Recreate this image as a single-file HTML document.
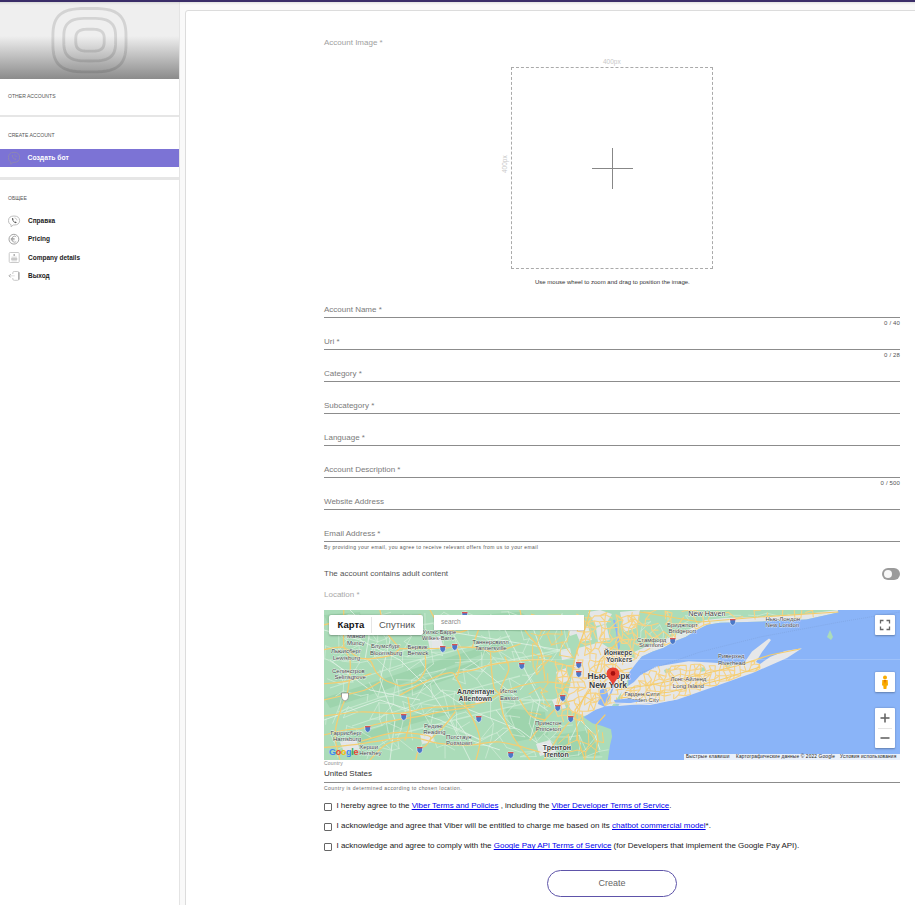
<!DOCTYPE html>
<html><head><meta charset="utf-8">
<style>
*{box-sizing:border-box;margin:0;padding:0}
html,body{width:915px;height:905px;overflow:hidden;background:#fff;font-family:"Liberation Sans",sans-serif}
.a{position:absolute;white-space:nowrap;line-height:1}
#topbar{position:absolute;left:0;top:0;width:915px;height:2px;background:#3a2d68}
#side{position:absolute;left:0;top:2px;width:179px;height:903px;background:#fff}
#sideborder{position:absolute;left:179px;top:2px;width:1px;height:903px;background:#e4e4e4}
#mainbg{position:absolute;left:180px;top:2px;width:735px;height:903px;background:#f9f9f9}
#card{position:absolute;left:185px;top:10px;width:760px;height:920px;background:#fff;border:1px solid #dcdcdc;border-radius:3px}
#hdr{position:absolute;left:0;top:2px;width:179px;height:77px;background:linear-gradient(to bottom,#efefef 0,#efefef 34px,#8b8b8b 77px)}
.sec{color:#555;font-size:5.1px;left:8px}
.div{position:absolute;left:0;width:179px;height:2px;background:#e6e6e6}
.item{font-size:6.5px;font-weight:bold;color:#222;left:28px}
.lbl{font-size:8px;color:#7a7a7a;left:324px}
.ul{position:absolute;left:324px;width:576px;height:1px;background:#8c8c8c}
.cnt{font-size:6px;color:#555;letter-spacing:0.15px}
.cb{position:absolute;left:324px;width:8px;height:8px;border:1px solid #666;border-radius:1px}
.chk{left:336.5px;font-size:8px;color:#1a1a1a;letter-spacing:-0.04px}
.chk u{color:#0000ee;text-decoration:underline;text-underline-offset:1px}
</style></head><body>
<div id="topbar"></div>
<div id="side"></div>
<div id="hdr">
<svg width="179" height="77" style="position:absolute;left:0;top:0">
 <g fill="none" stroke="rgba(0,0,0,0.115)" stroke-width="2.9"><path d="M126.05 38.15 L125.94 45.57 L125.61 49.56 L125.06 52.78 L124.28 55.54 L123.29 57.96 L122.06 60.10 L120.61 62.00 L118.92 63.68 L116.99 65.14 L114.80 66.40 L112.32 67.46 L109.53 68.32 L106.34 68.99 L102.63 69.47 L98.02 69.75 L89.45 69.85 L80.88 69.75 L76.27 69.47 L72.56 68.99 L69.37 68.32 L66.58 67.46 L64.10 66.40 L61.91 65.14 L59.98 63.68 L58.29 62.00 L56.84 60.10 L55.61 57.96 L54.62 55.54 L53.84 52.78 L53.29 49.56 L52.96 45.57 L52.85 38.15 L52.96 30.73 L53.29 26.74 L53.84 23.52 L54.62 20.76 L55.61 18.34 L56.84 16.20 L58.29 14.30 L59.98 12.62 L61.91 11.16 L64.10 9.90 L66.58 8.84 L69.37 7.98 L72.56 7.31 L76.27 6.83 L80.88 6.55 L89.45 6.45 L98.02 6.55 L102.63 6.83 L106.34 7.31 L109.53 7.98 L112.32 8.84 L114.80 9.90 L116.99 11.16 L118.92 12.62 L120.61 14.30 L122.06 16.20 L123.29 18.34 L124.28 20.76 L125.06 23.52 L125.61 26.74 L125.94 30.73Z"/><path d="M115.65 37.65 L115.57 42.64 L115.34 45.32 L114.95 47.48 L114.40 49.34 L113.69 50.96 L112.82 52.40 L111.79 53.68 L110.60 54.80 L109.23 55.78 L107.67 56.63 L105.92 57.34 L103.94 57.92 L101.68 58.37 L99.04 58.69 L95.78 58.89 L89.70 58.95 L83.62 58.89 L80.36 58.69 L77.72 58.37 L75.46 57.92 L73.48 57.34 L71.73 56.63 L70.17 55.78 L68.80 54.80 L67.61 53.68 L66.58 52.40 L65.71 50.96 L65.00 49.34 L64.45 47.48 L64.06 45.32 L63.83 42.64 L63.75 37.65 L63.83 32.66 L64.06 29.98 L64.45 27.82 L65.00 25.96 L65.71 24.34 L66.58 22.90 L67.61 21.62 L68.80 20.50 L70.17 19.52 L71.73 18.67 L73.48 17.96 L75.46 17.38 L77.72 16.93 L80.36 16.61 L83.62 16.41 L89.70 16.35 L95.78 16.41 L99.04 16.61 L101.68 16.93 L103.94 17.38 L105.92 17.96 L107.67 18.67 L109.23 19.52 L110.60 20.50 L111.79 21.62 L112.82 22.90 L113.69 24.34 L114.40 25.96 L114.95 27.82 L115.34 29.98 L115.57 32.66Z"/><path d="M104.25 38.20 L104.21 40.76 L104.08 42.14 L103.86 43.25 L103.56 44.21 L103.17 45.04 L102.70 45.78 L102.13 46.44 L101.47 47.02 L100.72 47.52 L99.87 47.96 L98.91 48.32 L97.82 48.62 L96.58 48.85 L95.13 49.02 L93.34 49.12 L90.00 49.15 L86.66 49.12 L84.87 49.02 L83.42 48.85 L82.18 48.62 L81.09 48.32 L80.13 47.96 L79.28 47.52 L78.53 47.02 L77.87 46.44 L77.30 45.78 L76.83 45.04 L76.44 44.21 L76.14 43.25 L75.92 42.14 L75.79 40.76 L75.75 38.20 L75.79 35.64 L75.92 34.26 L76.14 33.15 L76.44 32.19 L76.83 31.36 L77.30 30.62 L77.87 29.96 L78.53 29.38 L79.28 28.88 L80.13 28.44 L81.09 28.08 L82.18 27.78 L83.42 27.55 L84.87 27.38 L86.66 27.28 L90.00 27.25 L93.34 27.28 L95.13 27.38 L96.58 27.55 L97.82 27.78 L98.91 28.08 L99.87 28.44 L100.72 28.88 L101.47 29.38 L102.13 29.96 L102.70 30.62 L103.17 31.36 L103.56 32.19 L103.86 33.15 L104.08 34.26 L104.21 35.64Z"/></g>
</svg>
</div>
<div id="sideborder"></div>
<div id="mainbg"></div>
<div id="card"></div>
<div style="position:absolute;left:0;top:2px;width:915px;height:3px;background:linear-gradient(to bottom,rgba(0,0,0,0.1),rgba(0,0,0,0.04) 50%,rgba(0,0,0,0))"></div>

<!-- sidebar text -->
<div class="a sec" style="top:93.8px">OTHER ACCOUNTS</div>
<div class="div" style="top:115px"></div>
<div class="a sec" style="top:132.7px">CREATE ACCOUNT</div>
<div style="position:absolute;left:0;top:149px;width:179px;height:18px;background:#7c73d5"></div>
<div class="a item" style="top:154.8px;color:#fff;font-size:6.8px;left:27.5px">Создать бот</div>
<div class="div" style="top:177px;height:3px"></div>
<div class="a sec" style="top:196px">ОБЩЕЕ</div>
<div class="a item" style="top:217.5px">Справка</div>
<div class="a item" style="top:235.8px">Pricing</div>
<div class="a item" style="top:254.6px">Company details</div>
<div class="a item" style="top:273.2px">Выход</div>


<!-- sidebar icons -->
<svg width="14" height="15" style="position:absolute;left:7px;top:151px" viewBox="0 0 14 15"><g fill="none" stroke="#8d86b3" stroke-width="1"><path d="M7 1.3 C10.6 1.3 12.6 3 12.6 6.4 C12.6 9.8 10.6 11.4 7 11.4 L6 11.4 L3.8 13.3 L3.8 11 C2.2 10.2 1.4 8.8 1.4 6.4 C1.4 3 3.4 1.3 7 1.3Z"/></g><path d="M4.7 4.3 Q5 7.6 8.7 9 Q9.5 8.7 9.4 8.1 L8.3 7.2 L7.6 7.7 Q6.3 7 5.9 5.8 L6.4 5.1 L5.7 3.9 Q4.9 3.8 4.7 4.3Z" fill="#8d86b3"/><path d="M7.3 3.6 Q9.6 3.8 10 6.2 M7.3 4.6 Q8.8 4.8 9 6.1" fill="none" stroke="#8d86b3" stroke-width="0.5"/></svg>

<svg width="14" height="15" style="position:absolute;left:7px;top:214px" viewBox="0 0 14 15"><g fill="none" stroke="#b8b8b8" stroke-width="0.9"><path d="M7 2 C10.6 2 12.6 3.6 12.6 6.6 C12.6 9.6 10.6 11 7 11 L6.2 11 L4.1 12.8 L4.1 10.7 C2.4 10 1.5 8.7 1.5 6.6 C1.5 3.6 3.4 2 7 2Z"/></g><path d="M4.9 4.5 Q5.2 7.8 8.9 9.2 Q9.7 8.9 9.6 8.3 L8.5 7.4 L7.8 7.9 Q6.5 7.2 6.1 6 L6.6 5.3 L5.9 4.1 Q5.1 4 4.9 4.5Z" fill="#555"/><path d="M7.5 3.9 Q9.7 4.1 10.1 6.4" fill="none" stroke="#aaa" stroke-width="0.6"/></svg>

<svg width="14" height="14" style="position:absolute;left:7px;top:232px" viewBox="0 0 14 14"><circle cx="6.9" cy="7.2" r="4.9" fill="none" stroke="#9a9a9a" stroke-width="0.9"/><path d="M9.2 5 Q8.4 4.2 7.4 4.2 Q5 4.3 4.8 7.2 Q5 10.1 7.4 10.2 Q8.4 10.2 9.2 9.4 M3.8 6.6 H7.6 M3.8 7.8 H7.6" fill="none" stroke="#888" stroke-width="0.7"/></svg>

<svg width="14" height="14" style="position:absolute;left:7px;top:250px" viewBox="0 0 14 14"><rect x="2.2" y="2.5" width="10" height="10" rx="1" fill="none" stroke="#c4c4c4" stroke-width="0.9"/><circle cx="7.2" cy="5" r="0.9" fill="#aaa"/><path d="M4.5 7.2 H9.9 M4.2 9 H10.2 M4.5 10.8 H9.9" stroke="#c8c8c8" stroke-width="0.8"/><path d="M4.2 9 H10.2" stroke="#aaa" stroke-width="1"/></svg>

<svg width="14" height="14" style="position:absolute;left:7px;top:269px" viewBox="0 0 14 14"><path d="M5.8 5 V3.8 Q5.8 2.5 7.2 2.5 H10.8 Q11.9 2.5 11.9 3.8 V10 Q11.9 11.3 10.8 11.3 H7.2 Q5.8 11.3 5.8 10 V9" fill="none" stroke="#c4c4c4" stroke-width="0.9"/><path d="M11.9 3.2 V10.6" stroke="#8a8a8a" stroke-width="0.9"/><path d="M3.5 5.3 L2.1 6.8 L3.5 8.3" fill="none" stroke="#888" stroke-width="0.9"/><path d="M2.3 6.8 H7.8" stroke="#d8d8d8" stroke-width="0.8"/></svg>

<!-- form -->
<div class="a lbl" style="top:38.8px;color:#a0a0a0">Account Image *</div>
<div style="position:absolute;left:511px;top:67px;width:202px;height:202px;border:1px dashed #aaa"></div>
<div style="position:absolute;left:592px;top:168px;width:41px;height:1px;background:#878787"></div>
<div style="position:absolute;left:612px;top:148px;width:1px;height:41px;background:#878787"></div>

<div class="a lbl" style="top:305.8px">Account Name *</div><div class="ul" style="top:317px"></div>
<div class="a lbl" style="top:337.8px">Uri *</div><div class="ul" style="top:349px"></div>
<div class="a lbl" style="top:369.8px">Category *</div><div class="ul" style="top:381px"></div>
<div class="a lbl" style="top:401.8px">Subcategory *</div><div class="ul" style="top:413px"></div>
<div class="a lbl" style="top:433.8px">Language *</div><div class="ul" style="top:445px"></div>
<div class="a lbl" style="top:465.8px">Account Description *</div><div class="ul" style="top:477px"></div>
<div class="a lbl" style="top:497.8px">Website Address</div><div class="ul" style="top:509px"></div>
<div class="a lbl" style="top:529.8px">Email Address *</div><div class="ul" style="top:541px"></div>


<!-- counters -->
<div class="a cnt" style="top:320px;right:15px">0 / 40</div>
<div class="a cnt" style="top:352px;right:15px">0 / 28</div>
<div class="a cnt" style="top:480px;right:15px">0 / 500</div>

<div class="a" style="left:324px;top:544.6px;font-size:5px;color:#555;letter-spacing:0.4px">By providing your email, you agree to receive relevant offers from us to your email</div>
<div class="a" style="left:324px;top:570px;font-size:8px;color:#555">The account contains adult content</div>
<div style="position:absolute;left:882px;top:568px;width:18px;height:12px;border-radius:6px;background:#9b9b9b"></div>
<div style="position:absolute;left:884px;top:570px;width:8px;height:8px;border-radius:50%;background:#f8f8f8"></div>
<div class="a lbl" style="top:591px;color:#a8a8a8">Location *</div>

<!-- map -->
<div id="map" style="position:absolute;left:324px;top:610px;width:576px;height:150px;background:#aadcbb;overflow:hidden"><svg width="576" height="150" viewBox="324 610 576 150" style="position:absolute;left:0;top:0">
<rect x="324" y="610" width="576" height="150" fill="#abdcb9"/>
<!-- darker green ridges/forest -->
<g fill="#9ed4ad">
<path d="M324 698 L380 680 L440 660 L500 642 L505 646 L445 668 L385 690 L330 708Z"/>
<path d="M350 738 L410 716 L470 702 L472 708 L412 724 L355 746Z"/>
<path d="M460 616 L520 612 L545 626 L525 632 L470 628Z"/>
<path d="M505 708 L545 712 L548 735 L515 742Z"/>
<path d="M324 615 L360 612 L362 622 L330 628Z"/>
<path d="M400 688 L440 672 L480 660 L478 668 L440 682 L405 695Z"/>
<path d="M555 735 L590 730 L600 755 L560 758Z"/>
</g>
<!-- light ridge streaks -->
<g stroke="#c6e9cf" stroke-width="1.3" fill="none">
<path d="M330 688 L410 662 L480 644 L510 636"/>
<path d="M338 712 L420 684 L500 662"/>
<path d="M352 726 L430 700 L520 676"/>
<path d="M395 735 L470 716 L540 700"/>
<path d="M345 638 L400 628 L455 620"/>
<path d="M470 670 L520 658 L560 650"/>
</g>
<!-- urban grey NJ/NYC -->
<g fill="#e4e6e8">
<path d="M578 648 L590 645 L600 642 L612 650 L628 655 L640 661 L632 670 L623 690 L612 706 L598 712 L584 716 L572 712 L566 700 L570 685 L574 665Z"/><path d="M556 672 L566 668 L570 680 L560 684Z"/><path d="M552 700 L562 696 L566 708 L556 710Z"/><path d="M575 630 L588 626 L592 640 L580 642Z"/><path d="M596 628 L606 624 L610 640 L598 642Z"/><path d="M560 650 L570 648 L572 658 L562 660Z"/>
<path d="M588 612 L600 610 L612 614 L606 624 L596 626Z"/>
<path d="M566 622 L578 618 L582 632 L570 636Z"/>
<path d="M620 612 L640 610 L636 628 L624 632Z"/>
<path d="M472 694 L484 690 L490 700 L476 704Z"/>
<path d="M536 744 L550 740 L556 752 L540 756Z"/>
<path d="M420 734 L432 732 L434 742 L422 744Z"/>
<path d="M340 742 L356 738 L360 750 L344 752Z"/>
<path d="M428 640 L440 636 L444 648 L430 650Z"/>

</g>
<!-- CT land (re-assert) -->
<path d="M640 610 L838 610 L835 613 L806 619 L756 622 L730 623 L710 625 L694 632 L683 637 L667 645 L653 654 L639 662 L634 650 L642 630Z" fill="#abdcb9"/>
<path d="M634 652 L650 645 L668 638 L690 629 L705 620 L725 618 L760 617 L806 614 L838 610 L837.8 612.4 L806.4 619.4 L756 621.8 L720 622.7 L707.4 624.8 L696.5 630.3 L685.6 636.9 L674.6 641.2 L663.7 647.8 L652.8 651.6 L641.9 656.5 L636.4 663.1Z" fill="#e4e6e8"/>
<!-- water -->
<path d="M838 610 L900 610 L900 760 L607.8 760 L610 745.6 L612.1 736.8 L611 729.2 L602.3 726 L592.5 723.2 L583.7 717.2 L595 710 L605.6 706.2 L616.5 705.7 L623 705.1 L628 690 L628.7 672.9 L636.4 663.1 L641.9 656.5 L652.8 651.6 L663.7 647.8 L674.6 641.2 L685.6 636.9 L696.5 630.3 L707.4 624.8 L720 622.7 L756 621.8 L806.4 619.4 L837.8 612.4Z" fill="#8ab4f8"/>
<!-- rivers --><path d="M600 690 L606 688 L610 700 L605 707 L598 704Z" fill="#8ab4f8"/>
<path d="M614 620 L617 632 L619 647 L616 652" stroke="#8ab4f8" stroke-width="2" fill="none"/>
<path d="M608 700 L612 690 L615 680" stroke="#8ab4f8" stroke-width="1.5" fill="none"/>
<!-- Long Island land -->
<path d="M622 690 L634 682 L640 675.5 L655.7 666.8 L669 664.5 L688.5 661.3 L710 662.4 L743 664.6 L752 651.5 L769 638.4 L771 640 L762 652 L756 662 L760 664 L770 657 L785 651 L802 648.2 L787 658 L752 673.3 L721 684.2 L677.6 699.5 L655.7 702.8 L618.6 706Z" fill="#e6e7e9"/>
<g fill="#abdcb9"><path d="M664 670 L670 668 L671 672 L665 673Z"/><path d="M725 664 L731 662 L732 666 L726 667Z"/><path d="M700 668 L705 667 L705 671 L700 672Z"/></g>
<!-- small islands -->
<path d="M827 637 L830 630 L833 637 L831 640Z" fill="#abdcb9"/>

<!-- white minor roads --><path d="M325.6 645.9L338.9 650.4M325.6 645.9L324.7 658.4M324.7 658.4L332.2 662.2M327.4 678.9L339.0 683.6M326.1 718.9L325.6 724.3M333.0 619.3L348.9 614.4M333.0 619.3L338.6 629.5M338.6 629.5L348.9 631.0M338.7 633.9L346.7 640.5M338.7 633.9L338.9 650.4M338.7 633.9L348.9 631.0M338.9 650.4L342.7 653.1M338.9 650.4L346.7 640.5M332.2 662.2L348.3 673.0M332.2 662.2L342.7 653.1M338.5 671.8L348.3 673.0M338.5 671.8L343.7 683.0M339.0 683.6L343.7 683.0M335.8 696.0L343.3 690.9M339.2 706.9L335.4 716.7M339.2 706.9L343.3 690.9M335.4 716.7L332.7 723.2M335.4 716.7L348.3 706.9M331.5 735.9L337.5 749.5M337.5 749.5L346.8 744.7M337.5 749.5L337.7 757.1M348.9 614.4L358.7 615.1M348.9 631.0L353.8 630.9M348.9 631.0L346.7 640.5M342.7 653.1L359.1 645.3M341.9 661.2L359.4 662.8M348.3 673.0L343.7 683.0M348.3 673.0L353.0 682.0M343.7 683.0L353.0 682.0M343.7 683.0L343.3 690.9M343.3 690.9L360.8 695.9M348.3 706.9L343.4 717.7M348.3 706.9L357.8 712.0M343.4 717.7L357.8 712.0M346.7 725.7L356.1 728.9M346.7 725.7L344.9 738.2M358.7 615.1L370.8 618.0M353.8 630.9L361.0 640.0M359.1 645.3L359.4 662.8M359.4 662.8L367.3 661.1M359.4 662.8L355.4 669.5M360.8 695.9L368.0 694.4M356.1 728.9L358.0 734.1M356.1 728.9L371.1 737.5M354.4 749.6L371.3 746.6M364.1 623.2L377.6 626.2M364.1 623.2L369.9 639.2M364.1 623.2L377.7 641.8M369.9 639.2L377.7 641.8M371.0 651.4L374.8 645.6M367.3 661.1L374.6 656.8M367.3 661.1L372.1 666.9M369.1 682.3L377.7 697.0M368.0 694.4L367.2 700.8M370.1 719.0L379.6 719.1M370.1 719.0L378.9 702.8M367.8 729.3L382.0 725.3M371.3 746.6L366.9 758.9M376.4 616.2L390.6 612.4M377.6 626.2L377.7 641.8M377.6 626.2L386.2 638.7M377.7 641.8L386.2 638.7M377.7 641.8L374.8 645.6M374.8 645.6L374.6 656.8M374.6 656.8L391.6 655.6M374.6 656.8L389.5 671.4M374.6 656.8L387.6 648.4M380.0 670.2L382.8 679.2M382.8 679.2L377.7 697.0M377.7 697.0L393.4 696.4M378.9 702.8L393.3 704.2M378.9 702.8L379.6 719.1M379.6 719.1L386.8 713.0M379.6 719.1L382.0 725.3M379.6 719.1L393.3 704.2M382.0 725.3L386.3 722.1M382.0 741.3L391.9 750.4M377.6 746.6L391.9 750.4M377.6 746.6L389.5 738.9M389.4 628.5L386.2 638.7M389.4 628.5L403.3 614.4M386.2 638.7L387.6 648.4M386.2 638.7L398.8 627.0M391.6 655.6L389.5 671.4M391.6 655.6L403.1 650.9M389.5 671.4L402.8 666.6M389.5 671.4L394.3 682.2M393.4 696.4L393.3 704.2M393.4 696.4L396.7 679.6M393.3 704.2L405.3 710.7M386.8 713.0L386.3 722.1M386.3 722.1L401.2 728.9M386.3 722.1L389.5 738.9M389.5 738.9L397.5 738.2M389.5 738.9L399.0 748.5M391.9 750.4L399.0 748.5M398.8 627.0L411.6 636.3M404.2 641.5L411.6 636.3M404.2 641.5L413.6 648.0M403.1 650.9L413.6 648.0M403.1 650.9L402.5 655.7M403.1 650.9L411.6 636.3M402.5 655.7L407.7 656.8M402.5 655.7L402.8 666.6M396.7 679.6L411.7 680.2M396.7 679.6L399.2 695.4M402.8 701.5L411.7 704.8M402.8 701.5L405.3 710.7M405.3 710.7L415.7 710.5M405.3 710.7L401.2 728.9M401.2 728.9L397.5 738.2M397.5 738.2L399.0 748.5M397.5 738.2L412.9 750.4M410.9 614.9L410.6 624.7M413.6 648.0L407.7 656.8M407.7 656.8L426.5 657.2M407.6 670.1L426.5 657.2M411.7 680.2L427.2 680.4M411.7 680.2L412.5 695.1M411.7 680.2L419.4 675.1M412.5 695.1L420.0 692.1M411.7 704.8L415.7 710.5M411.7 704.8L420.0 692.1M415.7 710.5L420.6 703.6M409.8 722.4L412.5 739.9M424.9 613.5L425.0 627.5M425.0 627.5L427.3 637.7M419.4 675.1L437.0 671.3M419.4 675.1L427.2 680.4M419.4 675.1L433.4 663.8M427.2 680.4L420.0 692.1M420.0 692.1L432.7 697.5M420.0 692.1L430.3 684.0M420.6 703.6L435.2 705.6M420.6 703.6L424.3 714.5M424.3 714.5L433.6 711.1M424.3 714.5L430.6 725.3M424.3 714.5L435.2 705.6M423.6 724.8L424.8 736.1M424.8 736.1L431.4 732.5M424.8 736.1L421.0 747.3M436.5 618.5L443.9 612.3M436.5 618.5L433.9 624.7M433.9 624.7L441.4 625.4M430.6 637.1L431.7 652.2M431.7 652.2L441.9 652.2M431.7 652.2L433.4 663.8M431.7 652.2L442.5 655.6M437.0 671.3L445.7 668.9M430.3 684.0L432.7 697.5M430.3 684.0L445.7 668.9M432.7 697.5L442.6 690.1M435.2 705.6L447.5 706.7M433.6 711.1L448.3 712.9M433.6 711.1L430.6 725.3M430.6 725.3L431.4 732.5M430.6 725.3L443.1 735.1M431.4 732.5L443.1 735.1M431.4 732.5L437.1 747.5M437.1 747.5L445.0 744.6M443.9 612.3L457.1 619.5M441.4 625.4L457.3 624.4M441.4 625.4L454.4 636.0M443.6 640.7L441.9 652.2M441.9 652.2L442.5 655.6M442.6 690.1L454.9 691.5M442.6 690.1L447.5 706.7M447.5 706.7L448.3 712.9M448.3 712.9L456.5 730.1M444.0 725.6L456.5 730.1M444.0 725.6L443.1 735.1M444.0 725.6L456.6 714.6M445.0 744.6L454.6 749.9M445.0 744.6L445.1 758.0M457.3 624.4L466.2 623.5M454.4 636.0L458.0 649.5M454.4 636.0L463.3 651.1M455.3 662.7L471.1 661.4M458.3 670.1L463.1 669.3M458.3 670.1L453.0 679.2M453.0 679.2L465.3 683.7M454.9 691.5L465.6 696.1M454.9 691.5L453.4 699.9M453.4 699.9L456.6 714.6M456.6 714.6L465.8 712.0M456.6 714.6L456.5 730.1M456.5 730.1L469.6 722.1M456.5 730.1L460.0 736.0M456.5 730.1L468.8 734.8M465.0 611.5L480.8 618.9M466.2 623.5L468.6 634.1M463.3 651.1L471.1 661.4M463.1 669.3L482.0 671.4M463.1 669.3L465.3 683.7M463.1 669.3L476.8 679.1M463.1 669.3L481.8 658.8M465.6 696.1L478.8 696.0M465.8 712.0L473.5 719.0M468.8 734.8L480.6 739.3M468.8 734.8L470.5 744.6M470.5 744.6L473.8 744.8M480.8 618.9L491.0 614.9M480.2 625.9L488.1 625.9M481.5 635.6L490.5 641.9M481.3 652.5L481.8 658.8M481.8 658.8L482.0 671.4M481.8 658.8L484.9 650.1M482.0 671.4L485.4 668.1M476.8 679.1L484.6 690.3M476.8 679.1L485.4 668.1M479.4 700.6L484.6 690.3M473.5 719.0L479.7 722.6M480.6 739.3L492.1 734.6M480.6 739.3L493.5 723.3M473.8 744.8L489.6 745.6M473.8 744.8L492.1 734.6M491.0 614.9L499.7 630.2M488.1 625.9L499.7 630.2M488.1 625.9L490.5 641.9M490.5 641.9L484.9 650.1M484.9 650.1L493.3 657.7M484.9 650.1L500.7 636.7M493.3 657.7L503.3 659.1M493.3 657.7L485.4 668.1M493.3 657.7L504.2 669.8M484.6 690.3L501.7 693.9M490.6 702.0L490.5 717.7M490.6 702.0L501.7 693.9M490.5 717.7L493.5 723.3M493.5 723.3L492.1 734.6M492.1 734.6L496.9 732.8M492.1 734.6L489.6 745.6M489.6 745.6L485.5 758.1M489.6 745.6L501.7 759.9M501.6 612.0L508.2 611.7M498.0 650.5L503.3 659.1M498.0 650.5L515.0 661.2M501.7 693.9L512.9 694.2M502.1 702.0L515.1 704.0M502.1 702.0L503.7 716.1M503.7 716.1L510.0 715.9M503.7 716.1L514.9 728.4M503.7 716.1L515.1 704.0M503.2 728.2L514.9 728.4M503.2 728.2L496.9 732.8M496.9 732.8L506.6 747.5M508.2 611.7L524.7 618.2M508.2 611.7L514.0 624.2M512.2 651.5L522.8 652.9M512.2 651.5L515.0 661.2M515.0 661.2L524.4 659.1M509.0 678.2L522.5 686.3M509.0 678.2L512.9 694.2M512.9 694.2L515.1 704.0M510.0 715.9L519.7 717.3M510.0 715.9L514.9 728.4M514.9 728.4L524.8 736.8M511.2 734.5L524.8 736.8M506.6 747.5L520.7 752.2M520.6 628.7L523.9 639.8M523.9 639.8L529.2 638.8M522.8 652.9L530.4 661.7M522.8 652.9L529.2 638.8M524.4 659.1L530.4 661.7M522.4 675.1L528.7 675.4M517.9 699.9L530.7 716.1M517.9 699.9L530.2 696.2M520.7 752.2L534.5 751.6M520.5 756.7L536.1 756.5M520.5 756.7L534.5 751.6M531.9 615.0L528.9 630.3M531.9 615.0L548.1 625.1M529.2 638.8L544.2 648.3M528.7 675.4L539.5 671.2M528.7 675.4L535.3 685.4M530.2 696.2L533.5 700.8M533.5 700.8L544.7 708.4M533.5 700.8L530.7 716.1M533.5 700.8L547.5 710.7M530.7 716.1L529.3 723.4M530.7 716.1L548.5 728.3M529.3 723.4L536.9 741.4M536.9 741.4L548.5 728.3M534.5 751.6L536.1 756.5M548.1 625.1L540.0 639.4M544.2 648.3L557.6 651.5M539.8 657.5L551.0 661.3M539.8 657.5L557.6 651.5M541.4 689.7L544.7 708.4M544.7 708.4L551.1 703.5M544.7 708.4L547.5 710.7M548.5 728.3L544.2 734.8M544.2 734.8L554.4 743.9M544.2 743.9L552.2 736.9M547.0 757.9L559.5 760.0M557.6 619.8L562.1 613.8M557.6 619.8L557.3 629.6M557.3 629.6L554.9 634.9M554.9 634.9L557.6 651.5M557.6 651.5L568.8 650.0M557.6 651.5L551.0 661.3M557.5 723.9L561.9 726.3M552.2 736.9L569.5 737.0M552.2 736.9L561.9 726.3M559.5 760.0L563.1 756.9M559.5 760.0L570.3 745.0M562.1 613.8L563.7 626.2M563.7 626.2L566.3 641.6M566.3 641.6L568.8 650.0M561.9 726.3L572.5 725.0M569.5 737.0L579.4 735.4M569.5 737.0L570.3 745.0M563.1 756.9L578.5 754.9M579.4 735.4L580.3 743.5M579.4 735.4L585.6 749.4M580.3 743.5L578.5 754.9M578.5 754.9L585.6 749.4M585.0 727.1L587.1 733.0M585.6 749.4L595.9 736.9M583.5 757.5L601.9 756.9M583.5 757.5L599.1 751.4M598.7 730.0L595.9 736.9M599.1 751.4L608.2 749.8M631.9 615.9L642.7 624.5M634.4 622.6L632.1 630.9M634.6 643.8L640.3 642.0M642.7 624.5L650.6 621.7M642.7 624.5L641.0 631.0M641.0 631.0L640.3 642.0M641.0 631.0L650.6 621.7M649.6 633.8L653.8 640.7M649.6 633.8L659.8 624.9M653.8 640.7L652.1 648.7M659.8 624.9L663.6 632.8M663.6 632.8L662.6 643.4M662.6 643.4L670.8 633.3M667.6 611.9L668.5 625.9M668.5 625.9L670.8 633.3M670.8 633.3L677.9 634.9M678.8 625.6L689.2 620.6M677.9 634.9L686.7 635.0M685.6 615.7L695.9 615.8M685.6 615.7L689.2 620.6M686.7 635.0L694.2 629.5M695.9 615.8L703.8 612.2M703.8 612.2L703.0 621.5M703.0 621.5L714.7 622.0M714.7 622.0L725.9 621.0M726.1 616.7L730.1 615.3M730.1 615.3L740.8 615.4M748.5 615.2L757.5 615.9M757.5 615.9L766.9 613.2M766.9 613.2L777.8 615.8M787.9 614.3L795.6 616.2M816.5 613.8L821.4 614.6" stroke="#d3ecd9" stroke-width="0.7" fill="none" stroke-linecap="round"/>
<g stroke="#e3f3e7" stroke-width="0.8" fill="none">
<path d="M324 630 L360 640 L400 660 L430 690 L450 720 L470 760"/>
<path d="M380 610 L390 640 L380 680 L395 720 L390 760"/>
<path d="M420 660 L440 690 L470 710 L520 730 L560 760"/>
<path d="M500 620 L520 660 L540 700 L530 740"/>
<path d="M324 720 L380 700 L440 720 L480 740"/>
<path d="M450 632 L500 640 L560 650"/>
<path d="M470 660 L520 700 L560 700"/>
<path d="M530 620 L545 660 L520 690"/>
<path d="M330 660 L370 690 L420 700"/>
<path d="M570 740 L580 720 L595 735 L600 750"/>
<path d="M560 650 L575 625 L590 632"/>
<path d="M350 610 L370 630 L365 660"/>
<path d="M456 720 L470 740 L500 750"/>
<path d="M496 710 L510 728 L490 745"/>
</g>
<g stroke="#f4cd72" stroke-width="1.25" fill="none" stroke-linecap="round"><path d="M400.0 648.5C405.9 648.5 426.0 648.7 435.4 648.5C444.8 648.3 449.2 647.3 456.4 647.2C463.6 647.1 472.4 647.1 478.7 647.9C485.0 648.7 487.5 652.4 494.4 651.8C501.3 651.1 515.7 645.3 520.0 644.0"/><path d="M456.4 647.0C457.0 649.1 460.1 655.0 460.3 659.7C460.5 664.4 458.4 672.4 457.7 675.4C457.0 678.4 455.8 675.8 456.4 678.0C457.0 680.2 460.1 683.9 461.6 688.5C463.1 693.1 463.6 700.4 465.6 705.6C467.6 710.9 471.0 714.3 473.4 720.0C475.8 725.7 479.6 733.3 480.0 740.0C480.4 746.7 476.7 756.7 476.0 760.0"/><path d="M425.0 653.0C425.0 655.9 426.6 665.4 425.0 670.2C423.4 675.0 419.9 679.4 415.7 682.0C411.5 684.6 402.6 685.2 400.0 685.9"/><path d="M400.0 695.0C403.3 693.3 413.1 687.9 419.7 684.6C426.2 681.3 433.8 677.4 439.3 675.4C444.8 673.4 449.6 672.4 452.5 672.8C455.4 673.2 455.8 677.1 456.4 678.0"/><path d="M456.4 672.8C459.2 672.4 467.7 671.5 473.4 670.2C479.1 668.9 482.7 666.4 490.5 664.9C498.3 663.4 510.9 661.8 520.0 661.0C529.1 660.2 535.8 658.8 545.0 660.0C554.2 661.2 570.0 666.7 575.0 668.0"/><path d="M490.5 653.0C490.7 656.3 491.2 666.9 491.8 672.8C492.4 678.7 493.1 685.0 494.4 688.5C495.7 692.0 498.8 692.9 499.7 693.8"/><path d="M505.0 657.0C505.6 659.0 509.3 664.3 508.9 668.9C508.4 673.5 503.8 680.5 502.3 684.6C500.8 688.8 499.9 690.3 499.7 693.8C499.5 697.3 500.1 701.2 501.0 705.6C501.9 710.0 502.7 714.3 505.0 720.0C507.3 725.7 510.8 733.3 515.0 740.0C519.2 746.7 527.5 756.7 530.0 760.0"/><path d="M324.0 716.0C330.0 715.3 347.3 712.4 360.0 712.0C372.7 711.6 389.0 714.0 400.0 713.4C411.0 712.8 417.4 709.4 426.2 708.2C434.9 707.0 445.9 706.6 452.5 706.2C459.1 705.8 460.2 706.4 465.6 705.6C471.1 704.8 479.5 703.6 485.2 701.6C490.9 699.6 493.9 696.4 499.7 693.8C505.5 691.2 512.5 687.9 520.0 685.9C527.5 683.9 536.7 682.1 545.0 682.0C553.3 681.9 565.8 684.5 570.0 685.0"/><path d="M407.9 697.7C408.3 701.2 411.0 711.7 410.5 718.7C410.0 725.8 405.9 736.5 405.0 740.0"/><path d="M324.0 649.7C327.3 649.3 337.5 646.0 343.7 647.5C349.9 649.0 353.4 657.0 361.0 658.4C368.6 659.8 383.1 657.4 389.6 655.7C396.1 654.1 398.3 649.7 400.0 648.5"/><path d="M343.7 610.0C343.8 616.2 342.9 638.7 344.0 647.0C345.1 655.3 349.3 652.8 350.0 660.0C350.7 667.2 349.7 681.3 348.0 690.0C346.3 698.7 342.2 704.5 340.0 712.0C337.8 719.5 335.0 727.0 335.0 735.0C335.0 743.0 339.2 755.8 340.0 760.0"/><path d="M365.5 658.4C366.4 659.0 369.2 659.3 371.0 661.7C372.8 664.1 374.1 669.5 376.5 672.6C378.9 675.7 381.3 678.1 385.2 680.3C389.1 682.5 397.5 685.0 400.0 685.9"/><path d="M324.0 683.6C327.6 683.2 338.1 683.0 345.9 681.4C353.7 679.8 366.8 675.0 371.0 673.7"/><path d="M360.0 728.7C363.6 727.8 374.3 724.6 381.4 723.0C388.5 721.4 395.9 720.1 402.7 718.9C409.5 717.7 415.0 717.0 422.4 715.6C429.8 714.2 438.4 712.2 447.0 710.7C455.6 709.2 469.5 707.3 474.0 706.6"/><path d="M324.0 747.5C329.5 747.0 345.9 745.7 356.8 744.3C367.7 742.9 380.0 740.4 389.6 739.3C399.2 738.2 406.0 737.0 414.2 737.7C422.4 738.4 429.5 742.2 438.8 743.4C448.1 744.6 459.8 745.2 470.0 745.0C480.2 744.8 488.3 740.8 500.0 742.0C511.7 743.2 533.3 750.3 540.0 752.0"/><path d="M361.7 741.0C366.9 739.6 383.9 734.0 392.9 732.8C401.9 731.6 409.5 732.9 415.8 733.6C422.1 734.3 429.0 734.9 430.6 736.9C432.2 738.9 427.5 743.8 425.6 745.9C423.7 748.0 420.6 746.9 419.0 749.2C417.4 751.6 416.3 758.2 415.8 760.0"/><path d="M324.0 735.0C327.5 734.2 339.0 731.0 345.0 730.0C351.0 729.0 357.5 728.9 360.0 728.7"/><path d="M430.0 610.0C431.7 612.5 435.0 621.3 440.0 625.0C445.0 628.7 453.3 632.0 460.0 632.0C466.7 632.0 470.0 626.2 480.0 625.0C490.0 623.8 509.2 624.2 520.0 625.0C530.8 625.8 535.8 630.5 545.0 630.0C554.2 629.5 570.0 623.3 575.0 622.0"/><path d="M481.0 622.6C479.5 626.8 473.5 643.8 472.0 648.0"/><path d="M520.0 610.0C520.8 613.3 521.7 623.3 525.0 630.0C528.3 636.7 536.7 641.7 540.0 650.0C543.3 658.3 544.2 675.0 545.0 680.0"/><path d="M544.0 760.0C547.2 754.9 557.7 737.3 563.0 729.6C568.3 721.9 572.3 719.8 576.0 714.0C579.7 708.2 583.5 698.2 585.0 695.0"/><path d="M530.0 740.0C532.5 736.7 540.0 725.8 545.0 720.0C550.0 714.2 555.0 708.3 560.0 705.0C565.0 701.7 572.5 700.8 575.0 700.0"/><path d="M324.0 625.0C326.7 624.5 334.0 621.2 340.0 622.0C346.0 622.8 353.3 629.0 360.0 630.0C366.7 631.0 373.3 629.7 380.0 628.0C386.7 626.3 393.3 622.2 400.0 620.0C406.7 617.8 416.7 615.8 420.0 615.0"/><path d="M380.0 610.0C380.8 613.3 381.7 623.6 385.0 630.0C388.3 636.4 397.5 645.4 400.0 648.5"/><path d="M324.0 700.0C327.5 699.2 338.2 696.7 345.0 695.0C351.8 693.3 359.2 692.2 365.0 690.0C370.8 687.8 377.5 683.3 380.0 682.0"/><path d="M370.0 760.0C372.5 757.5 380.0 748.3 385.0 745.0C390.0 741.7 397.5 740.8 400.0 740.0"/><path d="M430.0 740.0C432.5 737.5 440.8 729.7 445.0 725.0C449.2 720.3 453.3 714.2 455.0 712.0"/><path d="M520.0 700.0C521.7 702.5 525.8 711.7 530.0 715.0C534.2 718.3 542.5 719.2 545.0 720.0"/></g><path d="M559.3 725.6L557.7 732.2M558.6 743.4L568.5 734.3M560.3 749.1L568.7 743.7M568.5 734.3L568.7 743.7M568.7 743.7L576.9 740.0M567.6 752.5L577.1 750.1M576.6 735.8L576.9 740.0M576.9 740.0L588.9 744.5M577.1 750.1L585.7 751.8M588.2 730.0L595.3 734.8M588.2 730.0L588.9 744.5M588.2 730.0L595.6 740.9M588.9 744.5L585.7 751.8M588.9 744.5L597.7 751.6M585.7 751.8L585.8 758.0M585.7 751.8L595.6 740.9M595.6 740.9L603.5 742.6M602.4 732.6L603.5 742.6M531.7 614.3L541.4 617.4M531.7 614.3L532.8 625.8M531.1 633.5L539.4 635.7M532.8 643.9L537.0 644.1M532.8 643.9L532.4 653.2M532.4 653.2L538.8 655.9M532.4 653.2L533.2 666.3M533.2 666.3L537.0 674.5M529.1 693.8L539.9 687.4M529.3 712.2L540.8 714.4M542.9 628.0L551.2 628.1M542.9 628.0L539.4 635.7M539.4 635.7L547.1 633.8M539.4 635.7L537.0 644.1M538.8 655.9L551.3 656.2M538.8 655.9L536.6 666.8M536.6 666.8L547.1 661.9M536.6 666.8L537.0 674.5M537.0 674.5L547.1 661.9M539.9 687.4L547.3 691.7M540.9 692.5L547.3 691.7M540.9 692.5L550.2 706.8M540.9 692.5L547.8 683.5M541.2 703.1L550.2 706.8M548.2 615.2L560.0 615.2M551.2 628.1L547.1 633.8M547.1 633.8L562.2 634.2M547.1 633.8L551.6 645.0M551.6 645.0L562.3 642.2M551.6 645.0L562.2 634.2M551.3 656.2L547.1 661.9M547.7 673.6L547.8 683.5M560.0 615.2L568.5 617.0M559.1 621.7L562.2 634.2M562.3 642.2L566.9 641.8M562.3 642.2L559.5 655.3M562.3 642.2L573.2 657.6M559.5 655.3L573.2 657.6M569.2 631.5L566.9 641.8" stroke="#f4cf76" stroke-width="1.0" fill="none" stroke-linecap="round" stroke-linejoin="round"/><path d="M555.7 660.7L555.3 664.2M555.3 664.2L562.9 664.2M555.3 664.2L558.1 671.6M558.1 671.6L561.1 670.4M558.1 671.6L556.3 678.1M556.3 678.1L562.8 676.6M556.3 678.1L555.8 682.7M556.3 678.1L562.5 683.0M555.8 682.7L562.5 683.0M555.8 682.7L555.3 687.2M555.3 687.2L561.6 688.7M555.3 687.2L557.7 694.7M557.7 694.7L563.6 691.3M557.7 694.7L558.0 698.0M558.0 698.0L563.7 699.4M558.0 698.0L556.8 703.3M555.0 709.5L557.8 716.4M557.8 716.4L561.5 715.3M562.9 664.2L561.1 670.4M561.1 670.4L566.7 671.9M561.1 670.4L562.8 676.6M562.8 676.6L568.1 676.6M562.8 676.6L562.5 683.0M562.8 676.6L566.7 671.9M562.5 683.0L561.6 688.7M561.6 688.7L566.7 687.0M561.6 688.7L563.6 691.3M561.6 688.7L568.9 694.6M563.6 691.3L568.9 694.6M563.6 691.3L563.7 699.4M563.7 699.4L566.3 699.9M563.7 699.4L560.5 703.8M560.5 703.8L569.4 704.1M560.5 703.8L562.5 711.1M562.5 711.1L567.8 708.3M562.5 711.1L561.5 715.3M561.5 715.3L567.6 715.0M561.5 715.3L563.5 721.7M566.4 665.6L572.5 665.2M566.4 665.6L566.7 671.9M566.7 671.9L568.1 676.6M568.1 676.6L568.9 682.2M568.9 682.2L573.6 682.1M566.7 687.0L574.4 687.9M568.9 694.6L574.4 691.9M568.9 694.6L566.3 699.9M566.3 699.9L569.4 704.1M569.4 704.1L567.8 708.3M567.8 708.3L572.3 711.2M567.8 708.3L567.6 715.0M567.6 715.0L571.9 717.0M567.6 715.0L567.9 718.6M572.5 665.2L578.6 665.2M572.5 665.2L573.1 669.6M573.1 669.6L578.9 669.1M573.1 669.6L571.8 677.0M571.8 677.0L579.3 677.9M571.8 677.0L573.6 682.1M573.6 682.1L577.2 681.8M573.6 682.1L574.4 687.9M574.4 687.9L579.5 687.1M574.4 691.9L579.5 687.1M574.0 699.7L578.6 696.6M574.0 699.7L574.6 703.3M574.6 703.3L580.1 705.2M574.6 703.3L579.3 710.9M572.3 711.2L571.9 717.0M572.3 711.2L579.0 714.6M571.9 717.0L574.6 719.0M571.9 717.0L578.9 720.5M574.6 719.0L578.9 720.5M576.9 614.1L582.9 617.8M576.9 614.1L578.7 621.6M578.7 621.6L584.7 620.9M578.7 621.6L578.8 625.6M578.8 625.6L584.6 627.3M578.8 625.6L577.2 631.3M577.2 631.3L584.1 632.1M579.9 640.0L586.0 638.6M580.2 641.9L584.8 644.5M580.2 641.9L576.7 650.8M580.2 641.9L586.0 638.6M576.7 650.8L578.3 655.6M577.8 659.9L583.0 659.6M577.8 659.9L578.6 665.2M578.6 665.2L582.2 664.3M578.6 665.2L578.9 669.1M578.9 669.1L579.3 677.9M578.9 669.1L582.2 664.3M579.3 677.9L583.0 678.1M579.3 677.9L584.2 682.0M577.2 681.8L584.2 682.0M577.2 681.8L579.5 687.1M579.5 687.1L585.9 687.8M579.5 687.1L577.3 691.7M577.3 691.7L578.6 696.6M577.3 691.7L585.9 687.8M578.6 696.6L585.2 696.8M578.6 696.6L580.1 705.2M580.1 705.2L579.3 710.9M579.3 710.9L582.2 711.2M579.3 710.9L579.0 714.6M579.0 714.6L582.6 714.9M579.0 714.6L578.9 720.5M578.9 720.5L582.7 720.5M578.9 720.5L582.6 714.9M582.9 617.8L591.5 617.8M582.9 617.8L584.7 620.9M584.7 620.9L587.8 623.1M584.7 620.9L584.6 627.3M584.6 627.3L589.2 626.9M584.6 627.3L584.1 632.1M584.1 632.1L591.4 631.5M584.1 632.1L586.0 638.6M586.0 638.6L589.6 639.7M586.0 638.6L584.8 644.5M586.0 638.6L591.4 631.5M584.8 644.5L590.4 643.4M584.8 644.5L585.9 647.1M585.9 647.1L591.4 650.3M585.9 647.1L584.5 655.5M585.9 647.1L589.9 653.0M584.5 655.5L589.9 653.0M583.0 659.6L582.2 664.3M582.2 664.3L583.5 669.4M583.5 669.4L583.0 678.1M583.0 678.1L589.3 677.2M584.2 682.0L585.9 687.8M586.0 693.6L590.6 693.1M586.0 693.6L585.2 696.8M586.0 693.6L589.8 687.2M585.2 696.8L591.5 700.3M585.2 696.8L584.4 705.0M584.4 705.0L591.5 700.3M582.2 711.2L588.0 711.1M582.2 711.2L582.6 714.9M582.6 714.9L582.7 720.5M582.7 720.5L584.4 724.2M591.5 617.8L587.8 623.1M587.8 623.1L593.8 620.9M587.8 623.1L589.2 626.9M587.8 623.1L596.0 628.4M587.8 623.1L594.5 615.9M589.2 626.9L596.0 628.4M589.2 626.9L591.4 631.5M591.4 631.5L593.3 631.0M591.4 631.5L589.6 639.7M589.6 639.7L590.4 643.4M590.4 643.4L591.4 650.3M591.4 650.3L589.9 653.0M589.9 653.0L596.2 654.0M589.9 653.0L590.0 659.8M589.9 653.0L594.7 648.0M590.0 659.8L595.6 662.0M590.0 659.8L588.3 663.7M588.3 663.7L589.6 669.5M589.6 669.5L596.0 672.7M589.6 669.5L589.3 677.2M589.6 669.5L594.3 665.7M589.3 677.2L594.7 676.0M589.3 677.2L596.0 672.7M589.3 681.0L593.4 683.5M589.3 681.0L589.8 687.2M589.8 687.2L593.3 685.8M589.8 687.2L590.6 693.1M590.6 693.1L595.3 692.9M590.6 693.1L591.5 700.3M591.5 700.3L595.7 697.7M591.5 700.3L590.4 703.0M591.5 700.3L596.1 702.3M591.5 700.3L595.3 692.9M590.4 703.0L596.1 702.3M590.4 703.0L588.0 711.1M590.4 703.0L593.9 710.1M588.0 711.1L593.9 710.1M594.5 615.9L600.1 615.6M593.8 620.9L599.3 621.8M593.8 620.9L596.0 628.4M596.0 628.4L593.3 631.0M593.3 631.0L596.2 638.5M596.1 642.4L602.0 642.6M596.1 642.4L594.7 648.0M594.7 648.0L598.6 649.1M596.2 654.0L595.6 662.0M595.6 662.0L602.4 660.6M595.6 662.0L594.3 665.7M594.3 665.7L601.7 663.8M594.3 665.7L596.0 672.7M596.0 672.7L600.7 672.2M596.0 672.7L594.7 676.0M594.7 676.0L593.4 683.5M593.4 683.5L593.3 685.8M593.3 685.8L598.8 688.0M595.3 692.9L599.1 694.0M595.3 692.9L595.7 697.7M595.3 692.9L601.1 697.5M595.7 697.7L601.1 697.5M595.7 697.7L596.1 702.3M596.1 702.3L593.9 710.1M596.1 702.3L601.1 697.5M600.1 615.6L605.5 614.7M600.1 615.6L604.8 621.2M600.1 615.6L607.0 612.5M599.3 621.8L604.8 621.2M599.3 621.8L601.7 627.2M601.7 627.2L605.2 628.9M601.7 627.2L601.8 632.8M601.8 632.8L604.2 631.7M601.8 632.8L599.2 639.0M599.2 639.0L604.5 638.6M599.2 639.0L602.0 642.6M599.2 639.0L604.2 631.7M602.0 642.6L607.1 642.2M602.0 642.6L598.6 649.1M602.0 642.6L604.5 638.6M598.6 649.1L600.7 654.8M602.4 660.6L604.1 658.4M602.4 660.6L601.7 663.8M601.7 663.8L604.7 664.4M601.7 663.8L600.7 672.2M600.7 672.2L604.7 664.4M598.8 674.8L606.4 675.4M598.8 674.8L601.4 683.6M601.4 683.6L604.7 681.1M601.4 683.6L598.8 688.0M598.8 688.0L604.7 688.5M598.8 688.0L599.1 694.0M599.1 694.0L605.2 693.2M599.1 694.0L601.1 697.5M601.1 697.5L605.0 705.5M607.0 612.5L605.5 614.7M605.5 614.7L612.0 618.0M605.5 614.7L604.8 621.2M604.8 621.2L610.6 621.6M604.8 621.2L605.2 628.9M605.2 628.9L610.1 628.1M605.2 628.9L604.2 631.7M604.2 631.7L604.5 638.6M604.5 638.6L612.9 639.3M604.5 638.6L607.1 642.2M607.1 642.2L609.8 642.6M604.2 648.8L612.4 647.4M604.2 648.8L606.3 656.1M606.3 656.1L611.4 654.4M606.3 656.1L604.1 658.4M604.1 658.4L613.3 660.3M604.1 658.4L604.7 664.4M604.1 658.4L612.9 664.7M604.7 664.4L612.9 664.7M604.7 664.4L604.9 671.9M604.7 664.4L612.7 670.7M604.9 671.9L606.4 675.4M606.4 675.4L604.7 681.1M604.7 681.1L604.7 688.5M604.7 681.1L613.2 674.9M604.7 688.5L611.7 687.6M604.7 688.5L605.2 693.2M605.2 693.2L611.7 687.6M607.3 698.4L605.0 705.5M607.3 698.4L610.1 694.3M605.0 705.5L609.8 703.2M605.0 705.5L610.7 697.7M610.1 628.1L618.8 627.3M610.1 628.1L609.5 633.8M610.1 628.1L617.9 620.8M609.5 633.8L612.9 639.3M612.9 639.3L618.3 636.4M612.9 639.3L609.8 642.6M612.4 647.4L617.7 649.8M612.4 647.4L611.4 654.4M611.4 654.4L615.7 654.1M611.4 654.4L613.3 660.3M611.4 654.4L618.3 660.4M611.4 654.4L617.7 649.8M613.3 660.3L618.3 660.4M613.3 660.3L612.9 664.7M612.9 664.7L615.4 664.4M612.9 664.7L612.7 670.7M612.7 670.7L615.6 669.5M613.2 674.9L616.6 674.8M613.2 674.9L612.8 680.8M612.8 680.8L611.7 687.6M610.1 694.3L618.1 694.3M610.1 694.3L610.7 697.7M610.7 697.7L609.8 703.2M609.8 703.2L616.6 702.1M616.0 614.8L621.3 617.8M616.0 614.8L617.9 620.8M616.0 614.8L623.0 620.3M617.9 620.8L623.0 620.3M617.9 620.8L618.8 627.3M618.8 627.3L617.9 631.8M617.9 631.8L618.3 636.4M617.9 631.8L621.8 639.7M618.3 636.4L621.8 639.7M618.3 636.4L615.6 641.9M618.3 636.4L621.9 643.4M615.6 641.9L617.7 649.8M617.7 649.8L621.0 650.9M617.7 649.8L615.7 654.1M617.7 649.8L621.0 656.1M615.7 654.1L621.0 656.1M615.7 654.1L618.3 660.4M615.7 654.1L621.0 650.9M618.3 660.4L622.7 660.2M618.3 660.4L615.4 664.4M615.4 664.4L615.6 669.5M615.4 664.4L624.1 673.0M615.6 669.5L624.1 673.0M615.6 669.5L616.6 674.8M616.6 674.8L623.8 676.9M616.6 674.8L618.7 681.7M618.7 681.7L621.0 683.3M618.7 681.7L617.0 688.1M617.0 688.1L618.1 694.3M617.0 688.1L621.0 683.3M616.5 697.8L616.6 702.1M621.3 617.8L627.9 615.6M621.3 617.8L623.0 620.3M623.0 620.3L620.8 626.0M620.8 626.0L629.0 628.0M620.8 626.0L622.8 633.3M620.8 626.0L627.9 634.5M620.8 626.0L628.5 622.3M622.8 633.3L621.8 639.7M622.8 633.3L629.4 639.4M621.8 639.7L629.4 639.4M621.8 639.7L621.9 643.4M621.8 639.7L627.6 643.2M621.9 643.4L627.6 643.2M621.0 650.9L621.0 656.1M621.0 650.9L628.1 654.6M621.0 656.1L628.1 654.6M621.0 656.1L622.7 660.2M621.0 656.1L627.7 661.6M621.0 656.1L628.3 650.6M622.7 660.2L627.7 661.6M622.7 660.2L622.7 664.6M624.1 673.0L628.9 672.6M623.8 676.9L621.0 683.3M621.0 683.3L621.7 689.1M627.9 615.6L633.1 615.4M627.9 615.6L628.5 622.3M627.9 615.6L633.8 619.7M628.5 622.3L633.8 619.7M628.5 622.3L633.1 615.4M629.0 628.0L631.6 628.6M629.0 628.0L627.9 634.5M629.0 628.0L633.8 619.7M627.9 634.5L632.7 632.5M629.4 639.4L635.2 639.9M629.4 639.4L627.6 643.2M627.6 643.2L632.7 650.7M628.3 650.6L632.7 650.7M628.1 654.6L635.1 653.3M628.1 654.6L627.7 661.6M627.7 661.6L634.9 659.4M633.1 615.4L639.4 615.1M633.1 615.4L638.0 622.7M631.6 628.6L637.3 626.1M631.6 628.6L632.7 632.5M631.6 628.6L638.0 622.7M632.7 632.5L635.2 639.9M632.7 632.5L638.1 638.2M635.2 639.9L638.1 638.2M635.2 639.9L633.4 642.3M633.4 642.3L637.7 645.1M633.4 642.3L632.7 650.7M632.7 650.7L635.1 653.3M635.1 653.3L638.8 655.5M635.1 653.3L634.9 659.4M639.4 615.1L638.0 622.7M621.1 696.1L623.5 694.1M621.1 696.1L621.2 698.5M621.2 698.5L626.5 700.9M621.2 698.5L623.5 694.1M626.6 690.4L629.6 690.2M626.6 690.4L623.5 694.1M623.5 694.1L630.8 694.7M626.5 700.9L631.6 699.2M629.6 690.2L633.7 690.7M629.6 690.2L630.8 694.7M629.6 690.2L635.7 694.9M629.6 690.2L634.8 686.0M630.8 694.7L635.7 694.9M630.8 694.7L631.6 699.2M631.6 699.2L636.4 700.4M634.8 686.0L640.4 685.0M634.8 686.0L633.7 690.7M633.7 690.7L640.0 689.7M633.7 690.7L635.7 694.9M635.7 694.9L641.3 693.6M635.7 694.9L636.4 700.4M635.7 694.9L640.0 689.7M636.4 700.4L639.1 700.9M636.4 700.4L636.2 704.0M638.6 680.6L645.4 681.2M638.6 680.6L640.4 685.0M638.6 680.6L645.9 685.3M640.4 685.0L640.0 689.7M639.1 700.9L644.3 694.6M643.7 673.6L648.5 674.6M643.7 673.6L645.4 681.2M645.4 681.2L645.9 685.3M645.4 681.2L649.3 686.6M645.9 685.3L649.3 686.6M645.9 685.3L646.2 691.1M645.9 685.3L651.6 679.6M646.2 691.1L650.3 690.6M646.2 691.1L644.3 694.6M646.2 691.1L649.3 686.6M644.3 694.6L649.9 695.4M644.3 694.6L646.5 701.4M646.5 701.4L649.6 699.3M650.3 670.5L656.4 671.6M650.3 670.5L648.5 674.6M648.5 674.6L651.6 679.6M651.6 679.6L649.3 686.6M649.3 686.6L653.4 683.9M649.3 686.6L650.3 690.6M649.3 686.6L654.0 681.2M650.3 690.6L655.5 691.5M649.9 695.4L656.4 696.1M649.9 695.4L649.6 699.3M649.6 699.3L654.4 700.7M656.4 671.6L656.3 673.8M656.3 673.8L658.4 674.4M656.3 673.8L654.0 681.2M654.0 681.2L659.4 679.1M654.0 681.2L653.4 683.9M653.4 683.9L660.5 685.9M653.4 683.9L655.5 691.5M655.5 691.5L660.5 691.3M655.5 691.5L656.4 696.1M656.4 696.1L658.8 694.3M656.4 696.1L654.4 700.7M658.4 666.4L659.8 671.1M659.8 671.1L658.4 674.4M658.4 674.4L666.1 676.4M658.4 674.4L659.4 679.1M658.4 674.4L663.8 680.6M659.4 679.1L663.8 680.6M660.5 685.9L665.2 686.3M660.5 685.9L660.5 691.3M660.5 685.9L663.8 680.6M660.5 691.3L664.8 689.7M660.5 691.3L658.8 694.3M658.8 694.3L664.1 696.1M658.8 694.3L659.7 700.9M658.8 694.3L664.8 689.7M659.7 700.9L664.4 701.3M666.3 669.1L669.2 670.8M666.3 669.1L666.1 676.4M666.3 669.1L669.5 675.9M666.1 676.4L663.8 680.6M663.8 680.6L670.5 678.6M663.8 680.6L665.2 686.3M665.2 686.3L669.9 684.8M665.2 686.3L664.8 689.7M664.8 689.7L669.9 690.2M664.8 689.7L664.1 696.1M664.1 696.1L670.6 694.7M664.1 696.1L664.4 701.3M671.1 666.1L675.6 665.9M671.1 666.1L669.2 670.8M669.2 670.8L674.1 669.6M669.2 670.8L669.5 675.9M669.2 670.8L674.2 676.5M669.5 675.9L674.2 676.5M669.5 675.9L670.5 678.6M670.5 678.6L675.0 679.8M670.5 678.6L669.9 684.8M669.9 684.8L676.5 685.9M669.9 684.8L669.9 690.2M669.9 684.8L675.0 679.8M669.9 690.2L676.1 690.0M675.6 665.9L680.8 665.4M675.6 665.9L674.1 669.6M674.1 669.6L680.0 668.8M674.1 669.6L680.8 665.4M674.2 676.5L680.7 674.0M674.2 676.5L675.0 679.8M675.0 679.8L679.6 680.3M675.0 679.8L679.2 686.2M676.5 685.9L679.2 686.2M676.5 685.9L676.1 690.0M676.1 690.0L680.1 691.5M673.8 694.6L673.7 699.7M673.7 699.7L678.5 694.9M680.8 665.4L686.1 665.2M680.0 668.8L686.5 671.0M680.0 668.8L680.7 674.0M680.7 674.0L685.1 675.3M680.7 674.0L679.6 680.3M679.6 680.3L684.7 681.3M679.2 686.2L686.1 684.0M679.2 686.2L686.3 690.6M680.1 691.5L686.3 690.6M680.1 691.5L678.5 694.9M680.1 691.5L686.1 684.0M678.5 694.9L684.6 695.8M686.1 665.2L686.5 671.0M686.5 671.0L689.8 670.5M686.5 671.0L685.1 675.3M685.1 675.3L689.1 675.8M685.1 675.3L684.7 681.3M684.7 681.3L691.3 681.2M684.7 681.3L686.1 684.0M684.7 681.3L689.1 675.8M686.1 684.0L688.6 686.3M686.1 684.0L686.3 690.6M686.3 690.6L684.6 695.8M684.6 695.8L690.4 694.5M690.8 664.7L693.9 664.2M690.8 664.7L689.8 670.5M689.8 670.5L695.4 669.6M689.8 670.5L689.1 675.8M689.1 675.8L694.5 673.8M689.1 675.8L691.3 681.2M691.3 681.2L696.3 679.8M691.3 681.2L688.6 686.3M688.6 686.3L695.3 684.2M688.6 686.3L689.1 688.8M689.1 688.8L696.4 688.7M689.1 688.8L690.4 694.5M693.9 664.2L699.8 664.1M693.9 664.2L695.4 669.6M695.4 669.6L701.4 668.8M695.4 669.6L694.5 673.8M695.4 669.6L699.8 664.1M694.5 673.8L699.4 674.7M694.5 673.8L696.3 679.8M694.5 673.8L699.7 679.1M696.3 679.8L699.7 679.1M696.3 679.8L695.3 684.2M696.3 679.8L699.4 674.7M695.3 684.2L701.2 684.4M695.3 684.2L696.4 688.7M695.3 684.2L699.7 679.1M696.4 688.7L700.2 690.3M696.4 688.7L701.2 684.4M699.8 664.1L703.8 666.3M699.8 664.1L701.4 668.8M701.4 668.8L699.4 674.7M699.4 674.7L699.7 679.1M699.4 674.7L703.5 680.0M699.7 679.1L703.5 680.0M699.7 679.1L701.2 684.4M701.2 684.4L704.4 685.0M701.2 684.4L700.2 690.3M703.8 666.3L706.1 671.3M706.1 671.3L710.8 669.5M706.1 671.3L704.2 675.9M704.2 675.9L711.2 673.9M704.2 675.9L703.5 680.0M703.5 680.0L709.1 680.2M703.5 680.0L704.4 685.0M703.5 680.0L711.2 673.9M704.4 685.0L710.1 685.9M709.2 665.8L715.3 665.8M709.2 665.8L710.8 669.5M710.8 669.5L714.9 671.2M710.8 669.5L711.2 673.9M711.2 673.9L709.1 680.2M709.1 680.2L714.4 679.4M709.1 680.2L710.1 685.9M710.1 685.9L716.5 685.4M715.3 665.8L714.9 671.2M714.9 671.2L719.3 670.2M714.9 671.2L715.9 675.0M715.9 675.0L719.3 675.7M715.9 675.0L714.4 679.4M714.4 679.4L716.5 685.4M714.4 679.4L719.3 675.7M716.5 685.4L718.5 683.6M721.3 664.4L724.2 664.6M721.3 664.4L719.3 670.2M719.3 670.2L723.4 670.7M719.3 670.2L719.3 675.7M719.3 675.7L726.0 675.8M719.3 675.7L719.4 681.3M719.4 681.3L726.5 680.8M719.4 681.3L718.5 683.6M724.2 664.6L729.2 665.7M724.2 664.6L723.4 670.7M724.2 664.6L728.8 669.6M723.4 670.7L728.8 669.6M723.4 670.7L726.0 675.8M726.0 675.8L731.4 674.7M726.0 675.8L726.5 680.8M726.0 675.8L728.9 680.5M726.5 680.8L728.9 680.5M729.2 665.7L728.8 669.6M728.8 669.6L734.8 670.9M728.8 669.6L731.4 674.7M731.4 674.7L734.3 674.6M731.4 674.7L728.9 680.5M728.9 680.5L733.7 678.5M734.4 665.5L734.8 670.9M734.8 670.9L734.3 674.6M734.3 674.6L740.7 675.5M734.3 674.6L733.7 678.5M733.7 678.5L740.7 675.5M739.8 666.0L740.1 669.5M740.1 669.5L746.2 671.6M740.1 669.5L740.7 675.5M743.9 664.7L746.2 671.6M746.2 671.6L748.8 671.4M751.3 661.4L754.8 661.6M751.3 661.4L751.1 665.6M751.1 665.6L754.2 664.0M751.1 665.6L748.8 671.4M748.8 671.4L755.4 670.9M754.8 661.6L754.2 664.0M754.2 664.0L759.6 664.6M755.4 670.9L759.7 668.6M755.4 670.9L759.6 664.6M759.6 664.6L759.7 668.6M632.2 612.5L631.3 618.2M631.3 618.2L636.1 620.0M631.3 618.2L632.1 625.2M631.3 618.2L636.0 623.7M632.1 625.2L636.0 623.7M631.6 637.8L630.0 643.8M630.0 643.8L631.5 651.5M631.5 651.5L630.6 658.8M636.1 620.0L644.9 626.0M636.0 623.7L644.9 626.0M636.0 623.7L637.6 632.9M637.6 632.9L637.4 636.7M637.9 644.5L642.9 645.7M637.9 644.5L646.3 637.1M639.5 651.3L644.0 651.7M639.5 651.3L636.3 658.6M643.7 612.0L650.8 612.6M645.6 619.3L649.5 619.1M645.6 619.3L644.9 626.0M645.6 619.3L650.8 612.6M644.9 626.0L651.2 625.2M645.1 630.5L646.3 637.1M645.1 630.5L652.6 638.0M646.3 637.1L642.9 645.7M644.0 651.7L649.8 648.6M650.8 612.6L655.9 610.1M651.2 625.2L658.2 623.4M651.2 625.2L651.7 630.0M651.7 630.0L658.1 630.1M651.7 630.0L657.2 636.5M652.6 638.0L657.2 636.5M652.6 638.0L650.4 642.4M650.4 642.4L655.9 646.0M650.4 642.4L657.2 636.5M657.2 636.5L664.7 645.3M657.2 636.5L663.3 631.3M665.1 611.0L672.1 613.1M665.1 611.0L665.6 618.8M665.1 611.0L670.8 618.6M665.5 624.2L671.2 624.3M665.5 624.2L670.8 618.6M663.3 631.3L672.5 638.7M666.0 635.8L664.7 645.3M664.7 645.3L672.0 642.1M672.1 613.1L670.8 618.6M670.8 618.6L671.2 624.3M671.2 624.3L678.9 623.9M671.2 624.3L671.6 631.4M671.6 631.4L675.6 630.0M671.6 631.4L672.5 638.7M671.6 631.4L675.5 638.5M672.5 638.7L675.5 638.5M678.9 623.9L682.4 623.6M678.9 623.9L683.6 617.4M675.6 630.0L685.4 631.0M675.6 630.0L675.5 638.5M682.0 611.5L688.7 610.0M682.4 623.6L690.4 624.7M685.4 631.0L688.6 632.0M688.7 610.0L695.4 610.8M688.7 610.0L694.9 618.1M690.4 624.7L698.1 626.2M690.4 624.7L696.8 629.0M695.4 610.8L701.0 612.8M694.9 618.1L698.1 626.2M696.8 629.0L703.7 625.1M701.0 612.8L711.2 613.2M701.0 612.8L703.6 619.5M703.6 619.5L703.7 625.1M703.7 625.1L710.3 623.2M711.2 613.2L717.6 611.9M711.2 613.2L708.2 619.5M708.2 619.5L710.3 623.2M717.6 611.9L722.8 613.2M722.8 613.2L728.3 612.2M728.3 612.2L736.1 618.4M736.1 618.4L742.7 616.5M754.0 610.2L760.4 610.3M754.0 610.2L755.1 619.3M767.8 612.9L766.1 617.9M782.8 610.2L782.2 616.4M794.3 610.6L794.8 618.1M794.8 618.1L800.9 617.9M801.8 610.5L800.9 617.9M805.6 612.6L812.6 610.2M812.6 610.2L813.3 617.0" stroke="#f6d283" stroke-width="1.1" fill="none" stroke-linecap="round" stroke-linejoin="round"/><!-- yellow highways -->
<g stroke="#f4cc6c" stroke-width="1.2" fill="none" stroke-linejoin="round" stroke-linecap="round">
<path d="M557 708 L562 692 L572 673 L575 657 L585 629 L590 610"/>
<path d="M620 640 L600 660 L590 690 L575 710 L578 740 L585 760"/>
<path d="M640 612 L700 622 L760 617 L838 612"/>
<path d="M616 690 L650 685 L700 675 L740 665 L770 655 L800 649"/>
<path d="M620 698 L670 692 L720 680 L760 667"/>
<path d="M585 679 L600 675 L615 672 L632 668"/>
<path d="M594 760 L598 740 L596 725 L605 715"/>
</g>
<!-- labels -->
<g font-family="Liberation Sans" font-size="6" fill="#3f4347" stroke="#fff" stroke-width="0.8" stroke-opacity="0.75" paint-order="stroke" stroke-linejoin="round">
<text x="347" y="638.2">Манси</text><text x="347" y="644.8">Muncy</text>
<text x="331" y="653">Льюисберг</text><text x="332.7" y="659.5">Lewisburg</text>
<text x="332" y="673.2">Селинсгров</text><text x="334.4" y="679.2">Selinsgrove</text>
<text x="371" y="648">Блумсбург</text><text x="370" y="654.6">Bloomsburg</text>
<text x="407.6" y="648.5">Бервик</text><text x="407.6" y="655">Berwick</text>
<text x="422.6" y="634.3" font-size="5.7">Уилкс-Барре</text><text x="422" y="640.3" font-size="5.7">Wilkes-Barre</text>
<text x="472.3" y="644.1">Таннерсвилл</text><text x="475" y="649.9">Tannersville</text>
<text x="500.1" y="693.1">Истон</text><text x="500" y="699.7">Easton</text>
<text x="424" y="727.9">Рединг</text><text x="423.2" y="733.6">Reading</text>
<text x="446.1" y="739.3">Потстаун</text><text x="446.1" y="745">Pottstown</text>
<text x="534.9" y="725">Принстон</text><text x="535.7" y="730.8">Princeton</text>
<text x="330.6" y="735.2">Гаррисберг</text><text x="333" y="741">Harrisburg</text>
<text x="359.2" y="748.9">Херши</text><text x="359.2" y="754.9">Hershey</text>
<text x="636.9" y="641.8">Стамфорд</text><text x="639.1" y="647.2">Stamford</text>
<text x="667" y="626.5">Бриджпорт</text><text x="668.6" y="632.5">Bridgeport</text>
<text x="717.9" y="658">Риверхед</text><text x="717.9" y="664.5">Riverhead</text>
<text x="670.5" y="680.6">Лонг-Айленд</text><text x="672.8" y="687.5">Long Island</text>
<text x="624.6" y="695.9">Гарден Сити</text><text x="626.9" y="702">Garden City</text>
<text x="765.4" y="621">Нью-Лондон</text><text x="765.4" y="626.5">New London</text>
</g>
<g font-family="Liberation Sans" fill="#3c4043" stroke="#fff" stroke-width="1.1" stroke-opacity="0.9" paint-order="stroke" stroke-linejoin="round" font-weight="bold">
<text x="456.9" y="693.7" font-size="7">Аллентаун</text><text x="458.6" y="700.8" font-size="7">Allentown</text>
<text x="542.7" y="750" font-size="7">Трентон</text><text x="543" y="757" font-size="7">Trenton</text>
<text x="587.5" y="679" font-size="8.5">Нью-Йорк</text><text x="589" y="687.6" font-size="8.5">New York</text>
<text x="688.3" y="616.3" font-size="7.2" font-weight="normal">New Haven</text>
<text x="604" y="654.5" font-size="6.8">Йонкерс</text><text x="606" y="661.5" font-size="6.8">Yonkers</text>
</g>
<!-- interstate shields -->
<g>
<g transform="translate(440,646)"><path d="M0 0 H5.5 V3.2 Q5.5 5.6 2.75 6.4 Q0 5.6 0 3.2Z" fill="#4a78c8" stroke="#fff" stroke-width="0.5"/><rect x="0" y="0" width="5.5" height="1.3" fill="#d9534f"/></g>
<g transform="translate(452,644)"><path d="M0 0 H5.5 V3.2 Q5.5 5.6 2.75 6.4 Q0 5.6 0 3.2Z" fill="#4a78c8" stroke="#fff" stroke-width="0.5"/><rect x="0" y="0" width="5.5" height="1.3" fill="#d9534f"/></g>
<g transform="translate(519,663)"><path d="M0 0 H5.5 V3.2 Q5.5 5.6 2.75 6.4 Q0 5.6 0 3.2Z" fill="#4a78c8" stroke="#fff" stroke-width="0.5"/><rect x="0" y="0" width="5.5" height="1.3" fill="#d9534f"/></g>
<g transform="translate(576,662)"><path d="M0 0 H5.5 V3.2 Q5.5 5.6 2.75 6.4 Q0 5.6 0 3.2Z" fill="#4a78c8" stroke="#fff" stroke-width="0.5"/><rect x="0" y="0" width="5.5" height="1.3" fill="#d9534f"/></g>
<g transform="translate(576,671)"><path d="M0 0 H5.5 V3.2 Q5.5 5.6 2.75 6.4 Q0 5.6 0 3.2Z" fill="#4a78c8" stroke="#fff" stroke-width="0.5"/><rect x="0" y="0" width="5.5" height="1.3" fill="#d9534f"/></g>
<g transform="translate(560,695)"><path d="M0 0 H5.5 V3.2 Q5.5 5.6 2.75 6.4 Q0 5.6 0 3.2Z" fill="#4a78c8" stroke="#fff" stroke-width="0.5"/><rect x="0" y="0" width="5.5" height="1.3" fill="#d9534f"/></g>
<g transform="translate(555,705)"><path d="M0 0 H5.5 V3.2 Q5.5 5.6 2.75 6.4 Q0 5.6 0 3.2Z" fill="#4a78c8" stroke="#fff" stroke-width="0.5"/><rect x="0" y="0" width="5.5" height="1.3" fill="#d9534f"/></g>
<g transform="translate(568,716)"><path d="M0 0 H5.5 V3.2 Q5.5 5.6 2.75 6.4 Q0 5.6 0 3.2Z" fill="#4a78c8" stroke="#fff" stroke-width="0.5"/><rect x="0" y="0" width="5.5" height="1.3" fill="#d9534f"/></g>
<g transform="translate(476,716)"><path d="M0 0 H5.5 V3.2 Q5.5 5.6 2.75 6.4 Q0 5.6 0 3.2Z" fill="#4a78c8" stroke="#fff" stroke-width="0.5"/><rect x="0" y="0" width="5.5" height="1.3" fill="#d9534f"/></g>
<g transform="translate(401,714)"><path d="M0 0 H5.5 V3.2 Q5.5 5.6 2.75 6.4 Q0 5.6 0 3.2Z" fill="#4a78c8" stroke="#fff" stroke-width="0.5"/><rect x="0" y="0" width="5.5" height="1.3" fill="#d9534f"/></g>
<g transform="translate(365,726)"><path d="M0 0 H5.5 V3.2 Q5.5 5.6 2.75 6.4 Q0 5.6 0 3.2Z" fill="#4a78c8" stroke="#fff" stroke-width="0.5"/><rect x="0" y="0" width="5.5" height="1.3" fill="#d9534f"/></g>
<g transform="translate(417,747)"><path d="M0 0 H5.5 V3.2 Q5.5 5.6 2.75 6.4 Q0 5.6 0 3.2Z" fill="#4a78c8" stroke="#fff" stroke-width="0.5"/><rect x="0" y="0" width="5.5" height="1.3" fill="#d9534f"/></g>
<g transform="translate(508,752)"><path d="M0 0 H5.5 V3.2 Q5.5 5.6 2.75 6.4 Q0 5.6 0 3.2Z" fill="#4a78c8" stroke="#fff" stroke-width="0.5"/><rect x="0" y="0" width="5.5" height="1.3" fill="#d9534f"/></g>
<g transform="translate(462,612)"><path d="M0 0 H5.5 V3.2 Q5.5 5.6 2.75 6.4 Q0 5.6 0 3.2Z" fill="#4a78c8" stroke="#fff" stroke-width="0.5"/><rect x="0" y="0" width="5.5" height="1.3" fill="#d9534f"/></g>
<g transform="translate(670,638)"><path d="M0 0 H5.5 V3.2 Q5.5 5.6 2.75 6.4 Q0 5.6 0 3.2Z" fill="#4a78c8" stroke="#fff" stroke-width="0.5"/><rect x="0" y="0" width="5.5" height="1.3" fill="#d9534f"/></g>
<g transform="translate(730,619)"><path d="M0 0 H5.5 V3.2 Q5.5 5.6 2.75 6.4 Q0 5.6 0 3.2Z" fill="#4a78c8" stroke="#fff" stroke-width="0.5"/><rect x="0" y="0" width="5.5" height="1.3" fill="#d9534f"/></g>
<g transform="translate(341.5,693)"><path d="M0 0 H7 V4 Q7 7 3.5 8 Q0 7 0 4Z" fill="#fff" stroke="#555" stroke-width="0.5"/></g>
</g>
<!-- tile seam / boundary -->
<path d="M614 700 L628 698.5 L642 701 L628 703.5 L616 704.5Z" fill="#8ab4f8"/><path d="M612 703 L650 704.3 L676.6 699" stroke="#e6e7e9" stroke-width="1.2" fill="none"/><path d="M324 659.5 H900" stroke="#fff" stroke-width="0.4" opacity="0.45"/>
<path d="M640 673 L700 652 L760 637 L840 622 L900 612" stroke="#6f8ec0" stroke-width="0.5" stroke-dasharray="1 1" fill="none" opacity="0.6"/>
</svg>























<!-- pin -->
<svg width="14" height="19" viewBox="0 0 14 19" style="position:absolute;left:282px;top:57px">
<path d="M7 0.5 C3.2 0.5 0.6 3.3 0.6 6.6 C0.6 11 5 13 7 18.5 C9 13 13.4 11 13.4 6.6 C13.4 3.3 10.8 0.5 7 0.5Z" fill="#ea4335"/>
<circle cx="7" cy="6.4" r="2.3" fill="#a50e0e"/>
</svg>
<!-- map type -->
<div style="position:absolute;left:5px;top:5px;width:94px;height:20px;background:#fff;border-radius:2px;box-shadow:0 0.5px 2px rgba(0,0,0,0.3)"></div>
<div style="position:absolute;left:46.5px;top:7px;width:0.5px;height:16px;background:#e6e6e6"></div>
<div class="a" style="left:13.5px;top:9.8px;font-size:9.5px;font-weight:bold;color:#111">Карта</div>
<div class="a" style="left:55px;top:9.8px;font-size:9.5px;color:#565656">Спутник</div>
<!-- search -->
<div style="position:absolute;left:110px;top:5px;width:150px;height:15px;background:#fff;box-shadow:0 0.5px 1.5px rgba(0,0,0,0.25)"></div>
<div class="a" style="left:117px;top:9.3px;font-size:6.6px;color:#8c8c8c">search</div>
<!-- right controls -->
<div style="position:absolute;left:551px;top:5px;width:20px;height:20px;background:#fff;border-radius:1px;box-shadow:0 0.5px 2px rgba(0,0,0,0.3)"></div>
<svg width="20" height="20" style="position:absolute;left:551px;top:5px"><g stroke="#666" stroke-width="1.3" fill="none"><path d="M5.5 8.5 V5.5 H8.5"/><path d="M11.5 5.5 H14.5 V8.5"/><path d="M14.5 11.5 V14.5 H11.5"/><path d="M8.5 14.5 H5.5 V11.5"/></g></svg>
<div style="position:absolute;left:551px;top:62px;width:20px;height:20px;background:#fff;border-radius:1px;box-shadow:0 0.5px 2px rgba(0,0,0,0.3)"></div>
<svg width="20" height="20" style="position:absolute;left:551px;top:62px"><g fill="#f9ab00"><circle cx="10" cy="5.6" r="2"/><path d="M7.3 8 H12.7 L13 13.5 H11.8 L11.4 17 H8.6 L8.2 13.5 H7Z"/></g><path d="M9 8 L10 12 L11 8" fill="#e37400"/></svg>
<div style="position:absolute;left:551px;top:98px;width:20px;height:40px;background:#fff;border-radius:1px;box-shadow:0 0.5px 2px rgba(0,0,0,0.3)"></div>
<div style="position:absolute;left:554px;top:118px;width:14px;height:0.5px;background:#e6e6e6"></div>
<svg width="20" height="40" style="position:absolute;left:551px;top:98px"><g stroke="#666" stroke-width="1.6"><path d="M5.5 10 H14.5"/><path d="M10 5.5 V14.5"/><path d="M5.5 30 H14.5"/></g></svg>
<!-- attribution -->
<div style="position:absolute;left:360px;top:144px;width:216px;height:6px;background:rgba(250,250,250,0.85)"></div>
<div class="a" style="left:362px;top:144.8px;font-size:4.8px;color:#222;letter-spacing:0.2px">Быстрые клавиши</div><div class="a" style="left:412px;top:144.8px;font-size:4.8px;color:#222;letter-spacing:0.15px">Картографические данные © 2022 Google</div><div class="a" style="left:516px;top:144.8px;font-size:4.8px;color:#222;letter-spacing:0.15px">Условия использования</div>
<!-- google logo -->
<div class="a" style="left:5px;top:138px;font-size:9px;font-weight:bold;letter-spacing:-0.3px"><span style="color:#4285f4">G</span><span style="color:#ea4335">o</span><span style="color:#fbbc05">o</span><span style="color:#4285f4">g</span><span style="color:#34a853">l</span><span style="color:#ea4335">e</span></div>
</div>

<div class="a" style="left:324px;top:760.5px;font-size:5px;color:#888;letter-spacing:0.2px">Country</div>
<div class="a" style="left:324px;top:770.2px;font-size:8px;color:#333">United States</div>
<div class="ul" style="top:782px"></div>
<div class="a" style="left:324px;top:785.6px;font-size:5px;color:#666;letter-spacing:0.45px">Country is determined according to chosen location.</div>

<div class="cb" style="top:803px"></div>
<div class="a chk" style="top:802.2px">I hereby agree to the <u>Viber Terms and Policies</u> , including the <u>Viber Developer Terms of Service</u>.</div>
<div class="cb" style="top:823px"></div>
<div class="a chk" style="top:822.2px;letter-spacing:0.01px">I acknowledge and agree that Viber will be entitled to charge me based on its <u>chatbot commercial model</u>*.</div>
<div class="cb" style="top:843px"></div>
<div class="a chk" style="top:842.2px;letter-spacing:-0.015px">I acknowledge and agree to comply with the <u>Google Pay API Terms of Service</u> (for Developers that implement the Google Pay API).</div>

<div style="position:absolute;left:547px;top:870px;width:130px;height:27px;border:1px solid #5e54a9;border-radius:14px"></div>
<div class="a" style="left:547px;width:130px;text-align:center;top:878.8px;font-size:9px;color:#666">Create</div>

<div class="a" style="left:535px;top:279px;font-size:6px;color:#333">Use mouse wheel to zoom and drag to position the image.</div>
<div class="a" style="left:603px;top:58.8px;font-size:6.5px;color:#c8c8c8">400px</div>
<div class="a" style="left:501.5px;top:173px;font-size:6.5px;color:#c8c8c8;transform:rotate(-90deg);transform-origin:left top">400px</div>

</body></html>
